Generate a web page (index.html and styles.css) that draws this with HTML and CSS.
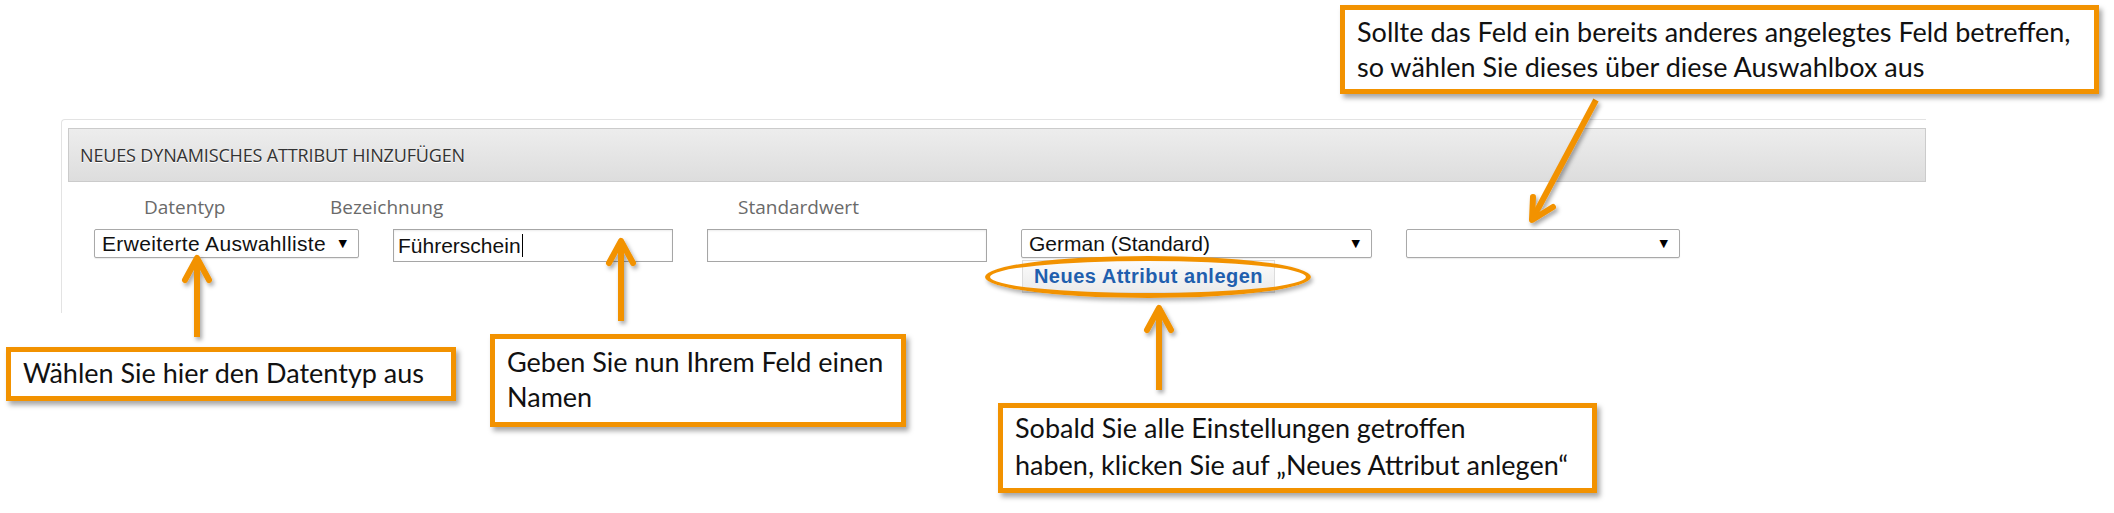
FILE: index.html
```html
<!DOCTYPE html>
<html lang="de">
<head>
  <meta charset="UTF-8">
  <title>Neues dynamisches Attribut</title>
  <link rel="stylesheet" href="styles.css">
</head>
<body>
  <div class="shot">
    <div class="panel">
      <div class="panel-head">Neues dynamisches Attribut hinzufügen</div>

      <div class="labels">
        <span class="lbl lbl-type">Datentyp</span>
        <span class="lbl lbl-name">Bezeichnung</span>
        <span class="lbl">Standardwert</span>
      </div>

      <div class="controls">
        <div class="select w-type"><span class="wide">Erweiterte Auswahlliste</span><span class="caret">▼</span></div>
        <div class="textbox"><span>Führerschein</span><span class="cursor"></span></div>
        <div class="textbox"></div>
        <div class="lang-col">
          <div class="select w-lang"><span>German (Standard)</span><span class="caret">▼</span></div>
          <button class="btn-add">Neues Attribut anlegen</button>
        </div>
        <div class="select w-ref"><span></span><span class="caret">▼</span></div>
      </div>
    </div>

    <!-- annotations -->
    <div class="ring"></div>

    <svg class="arrows" width="2114" height="513" viewBox="0 0 2114 513">
      <defs>
        <filter id="shade" x="-20%" y="-20%" width="140%" height="140%">
          <feDropShadow dx="2" dy="3" stdDeviation="2" flood-color="#000" flood-opacity="0.35"/>
        </filter>
      </defs>
      <g fill="none" stroke="#f29200" stroke-width="6" stroke-linejoin="round" filter="url(#shade)">
        <line x1="197" y1="337" x2="197" y2="260"/>
        <polyline points="185,280 197,258 209,280" stroke-linecap="round"/>

        <line x1="621" y1="321" x2="621" y2="243"/>
        <polyline points="609,263 621,241 633,263" stroke-linecap="round"/>

        <line x1="1159" y1="390" x2="1159" y2="310"/>
        <polyline points="1147,330 1159,308 1171,330" stroke-linecap="round"/>

        <line x1="1596" y1="100" x2="1533" y2="218"/>
        <polyline points="1533,197 1532,220 1553,207" stroke-linecap="round"/>
      </g>
    </svg>

    <div class="note note-type">Wählen Sie hier den Datentyp aus</div>
    <div class="note note-name">Geben Sie nun Ihrem Feld einen<br>Namen</div>
    <div class="note note-save">Sobald Sie alle Einstellungen getroffen<br>haben, klicken Sie auf „Neues Attribut anlegen“</div>
    <div class="note note-ref">Sollte das Feld ein bereits anderes angelegtes Feld betreffen,<br>so wählen Sie dieses über diese Auswahlbox aus</div>
  </div>
</body>
</html>
```

FILE: styles.css
```css
body {
  margin: 0;
  background: #fff;
}

.shot {
  position: relative;
  width: 2114px;
  height: 513px;
  overflow: hidden;
}

/* the form panel */
.panel {
  margin: 119px 0 0 61px;
  width: 1865px;
  height: 194px;
  padding: 8px 0 0 6px;
  box-sizing: border-box;
  border-top: 1px solid #e3e3e3;
  border-left: 1px solid #e3e3e3;
  border-top-left-radius: 4px;
}

.panel-head {
  height: 54px;
  box-sizing: border-box;
  padding-left: 11px;
  border: 1px solid #cbcbcb;
  background: linear-gradient(to bottom, #ededed, #dddddd);
  font-family: 'Open Sans', sans-serif;
  font-size: 18px;
  line-height: 52px;
  color: #333;
  text-transform: uppercase;
  letter-spacing: -0.15px;
  text-shadow: 0 1px 0 #fff;
}

.labels {
  display: flex;
  margin: 12px 0 0 0;
  padding-left: 76px;
  font-family: 'Open Sans', sans-serif;
  font-size: 19px;
  line-height: 26px;
  color: #6a6a6a;
}

.lbl-type { width: 186px; }
.lbl-name { width: 408px; }

.controls {
  display: flex;
  align-items: flex-start;
  gap: 34px;
  margin-top: 9px;
  padding-left: 26px;
  font-family: 'Liberation Sans', Arial, sans-serif;
  font-size: 21px;
  color: #111;
}

.select {
  display: flex;
  justify-content: space-between;
  align-items: center;
  height: 29px;
  box-sizing: border-box;
  padding: 0 11px 0 7px;
  border: 1px solid #a9a9a9;
  border-radius: 2px;
  background: #fff;
  box-shadow: 0 1px 1px rgba(0,0,0,0.08);
  white-space: nowrap;
}

.select .wide { letter-spacing: 0.35px; }

.select .caret {
  font-family: 'DejaVu Sans', sans-serif;
  font-size: 11px;
  color: #000;
}

.w-type { width: 265px; }
.w-lang { width: 351px; }
.w-ref  { width: 274px; }

.textbox {
  display: flex;
  align-items: center;
  width: 280px;
  height: 33px;
  box-sizing: border-box;
  padding-left: 4px;
  border: 1px solid #a6a6a6;
  box-shadow: inset 0 1px 2px rgba(0,0,0,0.08);
  background: #fff;
}

.cursor {
  width: 1px;
  height: 23px;
  margin-left: 1px;
  background: #000;
}

.lang-col {
  display: flex;
  flex-direction: column;
}

.btn-add {
  width: 253px;
  height: 33px;
  margin: 2px 0 0 1px;
  padding: 0;
  border: 1px solid #dcdcdc;
  background: linear-gradient(to bottom, #fbfbfb, #ebebeb);
  font-family: 'Liberation Sans', Arial, sans-serif;
  font-weight: bold;
  font-size: 20px;
  letter-spacing: 0.5px;
  color: #1f5fae;
}

/* annotation layer */
.ring {
  position: absolute;
  left: 985px;
  top: 256px;
  width: 326px;
  height: 42px;
  box-sizing: border-box;
  border: 5px solid #f29200;
  border-radius: 50%;
  box-shadow: 2px 3px 4px rgba(0,0,0,0.3);
}

.arrows {
  position: absolute;
  left: 0;
  top: 0;
}

.note {
  position: absolute;
  box-sizing: border-box;
  padding: 3px 12px 4px;
  border: 5px solid #f29200;
  background: #fff;
  box-shadow: 3px 4px 5px rgba(0,0,0,0.35);
  font-family: Lato, 'Carlito', sans-serif;
  font-size: 27px;
  line-height: 35px;
  color: #111;
  white-space: nowrap;
}

.note-type { left: 6px;    top: 347px; width: 450px; height: 54px; }
.note-name { left: 490px;  top: 334px; width: 416px; height: 93px; padding-top: 5px; }
.note-save { left: 998px;  top: 403px; width: 599px; height: 90px; line-height: 37px; padding-top: 1px; }
.note-ref  { left: 1340px; top: 5px;   width: 759px; height: 89px; padding-top: 4px; }
```
